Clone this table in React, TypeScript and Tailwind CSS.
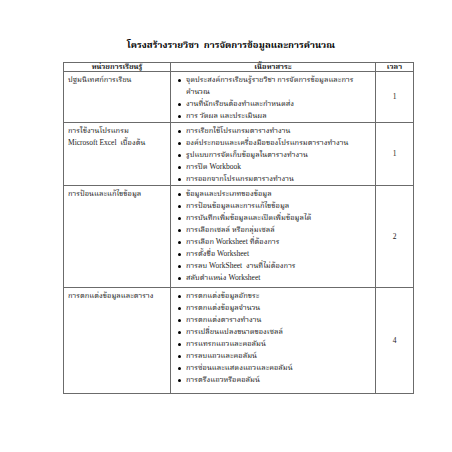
const rows = [
  {
    unit: ["ปฐมนิเทศก์การเรียน"],
    items: [
      "จุดประสงค์การเรียนรู้รายวิชา การจัดการข้อมูลและการคำนวณ",
      "งานที่นักเรียนต้องทำและกำหนดส่ง",
      "การ วัดผล และประเมินผล",
    ],
    hours: "1",
    h: "h-[51px]",
  },
  {
    unit: ["การใช้งานโปรแกรม", "Microsoft Excel  เบื้องต้น"],
    items: [
      "การเรียกใช้โปรแกรมตารางทำงาน",
      "องค์ประกอบและเครื่องมือของโปรแกรมตารางทำงาน",
      "รูปแบบการจัดเก็บข้อมูลในตารางทำงาน",
      "การปิด Workbook",
      "การออกจากโปรแกรมตารางทำงาน",
    ],
    hours: "1",
    h: "h-[60px]",
  },
  {
    unit: ["การป้อนและแก้ไขข้อมูล"],
    items: [
      "ข้อมูลและประเภทของข้อมูล",
      "การป้อนข้อมูลและการแก้ไขข้อมูล",
      "การบันทึกเพิ่มข้อมูลและเปิดเพิ่มข้อมูลได้",
      "การเลือกเซลล์ หรือกลุ่มเซลล์",
      "การเลือก Worksheet ที่ต้องการ",
      "การตั้งชื่อ Worksheet",
      "การลบ WorkSheet  งานที่ไม่ต้องการ",
      "สลับตำแหน่ง Worksheet",
    ],
    hours: "2",
    h: "h-[102px]",
  },
  {
    unit: ["การตกแต่งข้อมูลและตาราง"],
    items: [
      "การตกแต่งข้อมูลอักขระ",
      "การตกแต่งข้อมูลจำนวน",
      "การตกแต่งตารางทำงาน",
      "การเปลี่ยนแปลงขนาดของเซลล์",
      "การแทรกแถวและคอลัมน์",
      "การลบแถวและคอลัมน์",
      "การซ่อนและแสดงแถวและคอลัมน์",
      "การตรึงแถวหรือคอลัมน์",
    ],
    hours: "4",
    h: "h-[106px]",
  },
];

export default function App() {
  return (
    <div
      className="w-[452px] h-[452px] bg-white text-[#1a1a1a] pt-[38px]"
      style={{ fontFamily: '"Liberation Serif", "Noto Serif Thai", "Noto Sans Thai", "Noto Sans", serif' }}
    >
      <h1 className="text-center text-[9.5px] font-bold leading-[14px] mb-[10px] pl-[10px] text-black">
        โครงสร้างรายวิชา&nbsp;&nbsp;การจัดการข้อมูลและการคำนวณ
      </h1>
      <table className="ml-[63px] w-[350px] border-collapse table-fixed text-[7.5px] leading-[12px]">
        <colgroup>
          <col className="w-[107px]" />
          <col className="w-[205px]" />
          <col className="w-[38px]" />
        </colgroup>
        <thead>
          <tr className="h-[9px]">
            <th className="border-[1.5px] border-[#6b6b6b] font-bold leading-[8px]">หน่วยการเรียนรู้</th>
            <th className="border-[1.5px] border-[#6b6b6b] font-bold leading-[8px]">เนื้อหาสาระ</th>
            <th className="border-[1.5px] border-[#6b6b6b] font-bold leading-[8px]">เวลา</th>
          </tr>
        </thead>
        <tbody>
          {rows.map((r, i) => (
            <tr key={i} className={r.h}>
              <td className="border-[1.5px] border-[#6b6b6b] align-top px-[4px] pt-[2px]">
                {r.unit.map((u, j) => (
                  <div key={j} className="whitespace-pre">{u}</div>
                ))}
              </td>
              <td className="border-[1.5px] border-[#6b6b6b] align-top pl-[7px] pr-[6px] pt-[2px]">
                <ul>
                  {r.items.map((it, j) => (
                    <li key={j} className="flex">
                      <span className="w-[8px] shrink-0 flex items-start pt-[4.5px]">
                        <span className="block w-[3px] h-[3px] rounded-full bg-black" />
                      </span>
                      <span className="whitespace-pre-wrap">{it}</span>
                    </li>
                  ))}
                </ul>
              </td>
              <td className="border-[1.5px] border-[#6b6b6b] text-center align-middle">{r.hours}</td>
            </tr>
          ))}
        </tbody>
      </table>
    </div>
  );
}
